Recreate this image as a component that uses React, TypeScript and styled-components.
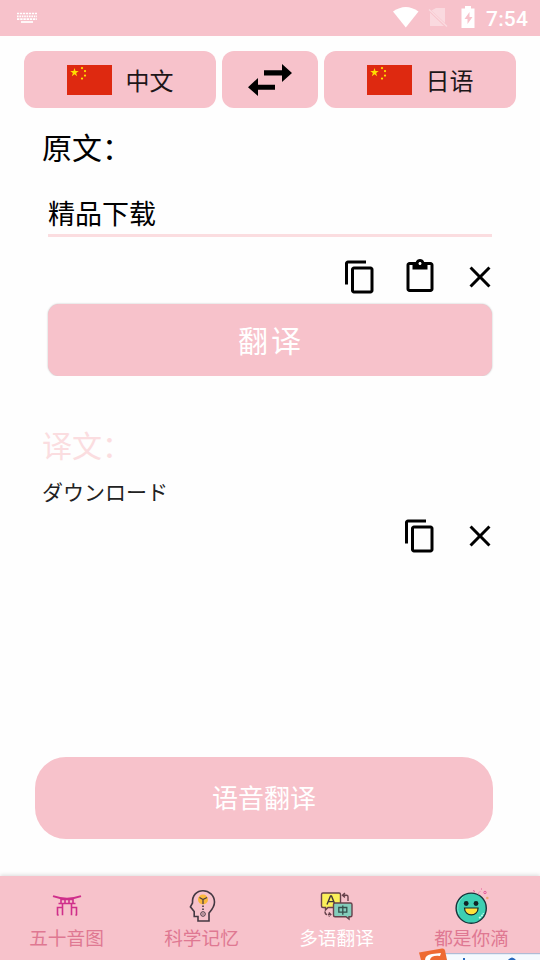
import React from "react";
import styled, { createGlobalStyle } from "styled-components";

const pink = "#f7c2cb";
const paleRose = "#fbdde0";

const GlobalStyle = createGlobalStyle`
  body { margin: 0; background: #fff; }
  * { box-sizing: border-box; }
  svg { display: block; flex: none; }
  button { border: 0; padding: 0; font: inherit; color: inherit; background: none; }
`;

const Screen = styled.div`
  width: 540px;
  height: 960px;
  position: relative;
  overflow: hidden;
  display: flex;
  flex-direction: column;
  background: #fefefe;
  color: #000;
  font-family: "Noto Sans CJK SC", sans-serif;
`;

const StatusBar = styled.header`
  height: 36px;
  flex: none;
  display: flex;
  align-items: center;
  justify-content: space-between;
  padding: 0 12px 0 16px;
  background: ${pink};
`;

const StatusIcons = styled.div`
  display: flex;
  align-items: center;
`;

const Clock = styled.span`
  width: 42px;
  margin-left: 11px;
  font: 500 21px/36px Roboto, sans-serif;
  letter-spacing: 0.2px;
  color: #fff;
  padding-top: 1px;
  white-space: nowrap;
`;

const LanguageRow = styled.div`
  display: grid;
  grid-template-columns: 192px 96px 192px;
  gap: 6px;
  height: 57px;
  margin: 15px 24px 0;
`;

const LanguageButton = styled.button`
  display: flex;
  align-items: center;
  justify-content: center;
  gap: 14px;
  border-radius: 12px;
  background: ${pink};
  color: #1d1618;
  font-size: 24px;
  line-height: 56px;
`;

const Heading = styled.h2<{ $faded?: boolean }>`
  margin: ${(p) => (p.$faded ? "46px" : "16px")} 0 0 42px;
  height: 44px;
  font-weight: 400;
  font-size: 30px;
  line-height: 44px;
  color: ${(p) => (p.$faded ? paleRose : "#000")};
`;

const SourceField = styled.div`
  margin: 24px 48px 0;
  height: 45px;
  border-bottom: 3px solid ${paleRose};
  font-size: 27px;
  line-height: 42px;
`;

const Actions = styled.div<{ $top: number }>`
  display: flex;
  justify-content: flex-end;
  gap: 24px;
  height: 36px;
  margin: ${(p) => p.$top}px 42px 0 0;
`;

const TranslateButton = styled.button`
  flex: none;
  width: 444px;
  height: 72px;
  margin: 9px 48px 0;
  padding: 0 0 2px 2px;
  border-radius: 11px;
  background: ${pink};
  box-shadow: 0 0 2px rgba(0, 0, 0, 0.28);
  clip-path: inset(-3px -3px 0 -3px);
  color: #fff;
  font-size: 30px;
  letter-spacing: 3px;
  line-height: 70px;
`;

const Result = styled.p`
  margin: 10px 0 0 42px;
  height: 30px;
  font-size: 21px;
  line-height: 30px;
  color: #222;
`;

const VoiceButton = styled.button`
  flex: none;
  width: 458px;
  height: 82px;
  margin: auto 0 37px 35px;
  padding-bottom: 2px;
  border-radius: 31px;
  background: ${pink};
  color: #fff;
  font-size: 26px;
  line-height: 80px;
`;

const TabBar = styled.nav`
  flex: none;
  display: grid;
  grid-template-columns: repeat(4, 1fr);
  height: 84px;
  background: ${pink};
  box-shadow: 0 -1px 4px rgba(0, 0, 0, 0.14);
`;

const Tab = styled.button<{ $active?: boolean }>`
  display: flex;
  flex-direction: column;
  align-items: center;
  padding: 12px 2px 0 0;
  font-size: 18.7px;
  line-height: 26px;
  color: ${(p) => (p.$active ? "#fff" : "#df7892")};
`;

const ImeBar = styled.div`
  position: absolute;
  right: 0;
  bottom: 0;
`;

const Keyboard = () => (
  <svg width="22" height="12" viewBox="0 0 22 12" fill="none" stroke="#fff" strokeWidth="1.7">
    <path d="M1 1.5h20" strokeDasharray="2.2 .8" />
    <path d="M1 4.3h20" strokeDasharray="1.6 .8" />
    <path d="M1 7.1h20" strokeDasharray="2.4 .8" />
    <path d="M5 10h12" />
  </svg>
);

const Flag = () => (
  <svg width="45" height="30" viewBox="0 0 30 20">
    <path fill="#de2910" d="M0 0h30v20H0z" />
    <g fill="#ffde00">
      <path d="M5 2l.67 2.07h2.18L6.09 5.35l.67 2.08L5 6.15 3.24 7.43l.67-2.08-1.76-1.28h2.18z" />
      <circle cx="10" cy="2" r=".75" />
      <circle cx="12" cy="4" r=".75" />
      <circle cx="12" cy="7" r=".75" />
      <circle cx="10" cy="9" r=".75" />
    </g>
  </svg>
);

const Swap = () => (
  <svg width="44" height="34" viewBox="0 0 44 34">
    <path d="M16 7.2h18V1l10 9-10 9v-6.500H16zM27 21.700H10V15L0 24.2 10 33v-6.200h17z" />
  </svg>
);

const Copy = () => (
  <svg width="36" height="36" viewBox="0 0 24 24">
    <path d="M16 1H4c-1.1 0-2 .9-2 2v14h2V3h12V1zm3 4H8c-1.1 0-2 .9-2 2v14c0 1.1.9 2 2 2h11c1.1 0 2-.9 2-2V7c0-1.1-.9-2-2-2zm0 16H8V7h11v14z" />
  </svg>
);

const Paste = () => (
  <svg width="36" height="36" viewBox="0 0 24 24">
    <path d="M19 2h-4.18C14.4.84 13.3 0 12 0c-1.3 0-2.4.84-2.82 2H5c-1.1 0-2 .9-2 2v16c0 1.1.9 2 2 2h14c1.1 0 2-.9 2-2V4c0-1.1-.9-2-2-2zm-7 0c.55 0 1 .45 1 1s-.45 1-1 1-1-.45-1-1 .45-1 1-1zm7 18H5V4h2v3h10V4h2v16z" />
  </svg>
);

const Close = () => (
  <svg width="36" height="36" viewBox="0 0 24 24">
    <path d="M19 6.41L17.59 5 12 10.59 6.41 5 5 6.41 10.59 12 5 17.59 6.41 19 12 13.41 17.59 19 19 17.59 13.41 12z" />
  </svg>
);

const Torii = () => (
  <svg width="36" height="36" viewBox="0 0 36 36" fill="none" stroke="#cf2f8b" strokeWidth="1.6">
    <path d="M4 8.2q14 5 28 0" strokeWidth="1.9" />
    <path d="M9.5 15.5h17M12 10.5v5M24 10.5v5M16 11v4M20 11v4M12.5 11.5h11" />
    <path d="M13.5 15.5v11.8M22.5 15.5v11.8M13.5 19.5H8.5v7.8M22.5 19.5h5v7.8M8.2 27h1.5M26.4 27H28" />
  </svg>
);

const Head = () => (
  <svg width="36" height="36" viewBox="0 0 36 36" fill="none" stroke="#443842" strokeWidth="1.6">
    <path d="M14 33v-4.500H10.200v-5L6.400 18.800 8.500 15C8 7 13 2.700 19 2.700S30.500 7.500 30.500 14c0 5-2.500 7.500-5.500 11v8z" />
    <circle cx="19" cy="11.500" r="5" fill="#fbb83b" stroke="none" />
    <path d="M19 16v-4.500L15.500 9.500M19 11.500l4-2" strokeWidth="1.200" />
    <path d="M19 17.500v5" strokeDasharray="1.500 1.500" />
    <circle cx="19" cy="26" r="2.300" strokeWidth="1" />
    <circle cx="19" cy="26" r=".7" fill="#443842" stroke="none" />
  </svg>
);

const Translate = () => (
  <svg width="36" height="36" viewBox="0 0 36 36" fill="none" stroke="#66414b" strokeWidth="1.4">
    <path fill="#fbef59" d="M4 5h16q1.500 0 1.500 1.500V18q0 1.500-1.500 1.500H9L6.500 22v-2.500H4q-1.500 0-1.500-1.500V6.500Q2.500 5 4 5z" />
    <path d="M8 16.500l3.500-8.500h1l3.500 8.500M9.200 13.600h5.600" stroke="#40363a" />
    <path fill="#83cdbb" d="M16 15h15.500q1.500 0 1.500 1.500V27q0 1.800-1.500 1.800H30V31l-3-2.200H16q-1.500 0-1.500-1.800V16.500Q14.500 15 16 15z" />
    <path d="M19.800 19.500h8v4.700h-8zM23.800 17.500v9.300" stroke="#344f4c" strokeWidth="1.300" />
    <path d="M24 7.200h3.500q1.500 0 1.500 1.500V13M26 5l-2.500 2.200L26 9.400" />
    <path d="M6 23.500q0 3 2 3h3.500M9.800 24.500l2 2-2 2" strokeDasharray="4 .8" />
  </svg>
);

const Smile = () => (
  <svg width="36" height="36" viewBox="0 0 36 36">
    <circle cx="17.200" cy="20.200" r="15.100" fill="#3dcfb2" stroke="#18333a" strokeWidth="1.400" />
    <path d="M5 26a14 14 0 0 1 4-17" fill="none" stroke="#74e7cc" />
    <circle cx="12.200" cy="15.500" r="2.400" fill="#102426" />
    <circle cx="22" cy="15.500" r="2.400" fill="#102426" />
    <path d="M10.500 20h13.600c0 9.200-13.600 9.200-13.600 0z" fill="#ffe13b" stroke="#19282a" strokeWidth="1.200" />
    <path d="M25 30q3-1.500 4.500-5" fill="none" stroke="#c9fff0" strokeWidth="1.500" strokeDasharray="2 1" />
    <g fill="none" stroke="#e55a9b">
      <circle cx="31" cy="4.500" r="1.200" />
      <path d="M19 2.500l2 1M25 4.500l1-1M27 1h1M24 6h1" />
    </g>
    <circle cx="33.300" cy="10" r="1.300" fill="#eba773" />
  </svg>
);

const tabs = [
  { label: "五十音图", Icon: Torii },
  { label: "科学记忆", Icon: Head },
  { label: "多语翻译", Icon: Translate, active: true },
  { label: "都是你滴", Icon: Smile },
];

export default function App() {
  return (
    <>
      <GlobalStyle />
      <Screen>
        <StatusBar>
          <Keyboard />
          <StatusIcons>
            <svg width="82" height="24" viewBox="0 0 82 24">
              <path d="M0 5.500Q12.800-3.500 25.500 5.500L12.800 21.500z" fill="#fff" />
              <path d="M43 2h9v15L38.500 4.500zM37 6.500l14 13.500H37z" fill="#fff" opacity=".38" />
              <path d="M36 3.500l18 17" stroke="#fff" opacity=".4" strokeWidth="1.500" />
              <path d="M72 0h6v2.500h3.500V22h-13V2.500H72zM76.500 6l-5 7h3v5l5-7h-3z" fill="#fff" fillRule="evenodd" />
            </svg>
            <Clock>7:54</Clock>
          </StatusIcons>
        </StatusBar>
        <LanguageRow>
          <LanguageButton><Flag />中文</LanguageButton>
          <LanguageButton aria-label="swap"><Swap /></LanguageButton>
          <LanguageButton><Flag />日语</LanguageButton>
        </LanguageRow>
        <Heading>原文：</Heading>
        <SourceField>精品下载</SourceField>
        <Actions $top={22}><Copy /><Paste /><Close /></Actions>
        <TranslateButton>翻译</TranslateButton>
        <Heading $faded>译文：</Heading>
        <Result lang="ja">ダウンロード</Result>
        <Actions $top={12}><Copy /><Close /></Actions>
        <VoiceButton>语音翻译</VoiceButton>
        <TabBar>
          {tabs.map(({ label, Icon, active }) => (
            <Tab key={label} $active={active}><Icon />{label}</Tab>
          ))}
        </TabBar>
        <ImeBar>
          <svg width="122" height="12" viewBox="0 0 122 12">
            <path d="M22 6h100v6H22z" fill="#f5faff" />
            <path d="M26 5.700h96" stroke="#9fb9d8" />
            <path d="M1 4.500L24 .5q2.500-.3 3 2l2 9.500H3z" fill="#ee6a32" />
            <path d="M7 12q0-5 7-6l9-1-1 3q-9-1-10 4z" fill="#fff" />
            <path d="M45 10h2v2h-2zM90 12q4-5 8 0z" fill="#2868bd" />
          </svg>
        </ImeBar>
      </Screen>
    </>
  );
}
